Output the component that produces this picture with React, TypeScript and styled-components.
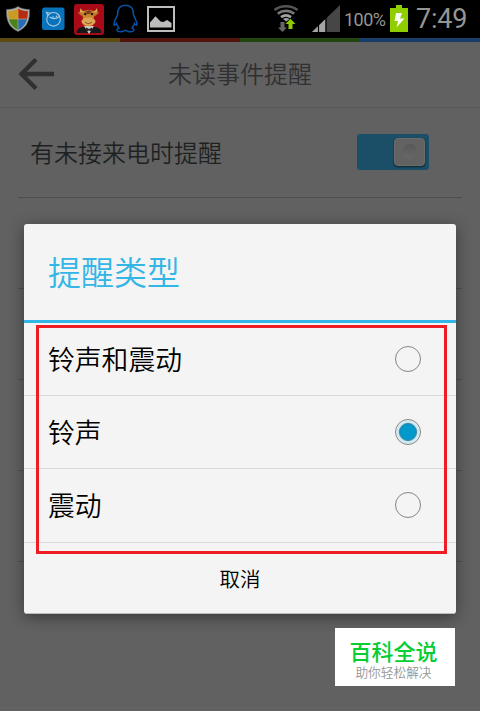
import React, { useState } from 'react';
import styled, { createGlobalStyle } from 'styled-components';

const GlobalStyle = createGlobalStyle`
  * { box-sizing: border-box; }
  body { margin: 0; background: #616161; }
`;

const Screen = styled.div`
  position: relative;
  width: 480px;
  height: 711px;
  overflow: hidden;
  background: #616161;
  font-family: "Noto Sans CJK SC", sans-serif;
  font-weight: 350;
`;

const StatusBar = styled.header`
  display: flex;
  justify-content: space-between;
  height: 38px;
  background: #000;
`;

const StatusIcons = styled.svg`
  display: block;
  flex: none;
`;

const StatusRight = styled.div`
  display: flex;
  align-items: center;
  height: 38px;
`;

const BatteryText = styled.span`
  width: 48px;
  padding-left: 2px;
  color: #949694;
  font: 400 18px/38px Roboto, sans-serif;
  letter-spacing: -0.5px;
  padding-top: 2px;
`;

const Clock = styled.span`
  width: 72px;
  padding-left: 8px;
  color: #949694;
  font: 400 27px/38px Roboto, sans-serif;
  letter-spacing: -0.2px;
`;

const ColourStrip = styled.div`
  display: grid;
  grid-template-columns: repeat(4, 1fr);
  height: 4px;
`;

const StripPart = styled.span<{ $colour: string }>`
  background: ${(p) => p.$colour};
`;

const TitleBar = styled.div`
  display: grid;
  grid-template-columns: 72px 1fr 72px;
  align-items: center;
  height: 66px;
  border-bottom: 1px solid #585858;
`;

const BackIcon = styled.svg`
  display: block;
  margin: -2px 0 0 17px;
`;

const PageTitle = styled.h1`
  margin: -3px 0 0;
  text-align: center;
  color: #303030;
  font-size: 24px;
  font-weight: 350;
  line-height: 36px;
`;

const SettingsList = styled.div`
  padding: 0 18px;
`;

const SettingRow = styled.div`
  display: flex;
  align-items: center;
  justify-content: space-between;
  height: 91px;
  padding: 0 33px 0 12px;
  border-bottom: 1px solid #4e4e4e;
  &:first-child { height: 90px; }
`;

const SettingLabel = styled.span`
  margin-top: -2px;
  color: #1e2122;
  font-size: 24px;
  line-height: 36px;
`;

const Switch = styled.button`
  display: flex;
  align-items: center;
  justify-content: flex-end;
  width: 72px;
  height: 36px;
  margin-top: -2px;
  padding: 0 4px 0 0;
  border: 0;
  border-radius: 3px;
  background: #1b4f67;
`;

const SwitchThumb = styled.span`
  display: grid;
  place-items: center;
  width: 31px;
  height: 28px;
  border: 1px solid #6b6b6b;
  border-radius: 4px;
  background: #626262;
  box-shadow: 0 1px 2px rgba(0, 0, 0, 0.55);
  &::after {
    content: '';
    width: 14px;
    height: 15px;
    border-radius: 50%;
    background: linear-gradient(#585858, #686868);
  }
`;

const Dialog = styled.section`
  position: absolute;
  left: 24px;
  top: 224px;
  width: 432px;
  height: 390px;
  border-radius: 3px;
  background: #f4f4f4;
  border-bottom: 1px solid #bcbcbc;
  box-shadow: 0 3px 15px rgba(0, 0, 0, 0.42);
`;

const DialogTitle = styled.h2`
  height: 99px;
  margin: 0;
  padding-left: 24px;
  border-bottom: 3px solid #33b5e5;
  color: #33b5e5;
  font-size: 33px;
  font-weight: 350;
  line-height: 94px;
`;

const Option = styled.label<{ $last: boolean }>`
  display: flex;
  align-items: center;
  justify-content: space-between;
  height: ${(p) => (p.$last ? 74 : 73)}px;
  padding: 0 35px ${(p) => (p.$last ? 1 : 0)}px 24px;
  border-bottom: 1px solid #d8d8d8;
  color: #000;
  font-size: 26.8px;
  line-height: 40px;
`;

const OptionName = styled.span`
  padding-bottom: 1px;
`;

const Radio = styled.button<{ $checked: boolean }>`
  display: grid;
  place-items: center;
  width: 26px;
  height: 26px;
  padding: 0;
  border: 1.500px solid #858585;
  border-radius: 50%;
  background: ${(p) => (p.$checked ? 'radial-gradient(circle closest-side, #a5d8ea 62%, #e6f1f5 100%)' : 'transparent')};
  &::after {
    content: '';
    width: 16px;
    height: 16px;
    border-radius: 50%;
    border: 1px solid #38819f;
    background: #0099cc;
    visibility: ${(p) => (p.$checked ? 'visible' : 'hidden')};
  }
`;

const CancelButton = styled.button`
  display: block;
  width: 100%;
  height: 70px;
  padding: 0;
  border: 0;
  background: transparent;
  color: #000;
  font: 350 20.5px/70px "Noto Sans CJK SC", sans-serif;
`;

const Highlight = styled.div`
  position: absolute;
  left: 36px;
  top: 325px;
  width: 411px;
  height: 229px;
  border: 3px solid #ee1c25;
  pointer-events: none;
`;

const Watermark = styled.aside`
  position: absolute;
  left: 335px;
  top: 628px;
  width: 120px;
  height: 58px;
  padding: 9px 3px 0 0;
  background: #fff;
  text-align: center;
`;

const WatermarkName = styled.div`
  color: #05ce34;
  font-size: 22px;
  font-weight: 500;
  line-height: 26px;
`;

const WatermarkTagline = styled.div`
  color: #969696;
  font-size: 12.7px;
  font-weight: 350;
  line-height: 18px;
`;

const options = ['铃声和震动', '铃声', '震动'];

function NotificationIcons() {
  return (
    <StatusIcons width="180" height="38" viewBox="0 0 180 38">
      <defs>
        <clipPath id="shield"><path d="M18 8.500c3 2 6 2.600 9.800 2.600.2 8.500-1.800 15-9.800 19-8-4-10-10.500-9.800-19C12 11.100 15 10.500 18 8.500z" /></clipPath>
      </defs>
      <path d="M18 6.500c3.500 2.200 7 2.900 11.500 2.900.5 10.500-2 17.500-11.500 22.200C8.500 26.900 6 19.900 6.500 9.400 11 9.400 14.500 8.700 18 6.500z" fill="#aeb0ac" stroke="#5b5d5b" strokeWidth=".6" />
      <g clipPath="url(#shield)">
        <path fill="#c99b22" d="M7 7h11v12H7z" />
        <path fill="#b52c13" d="M18 7h12v12H18z" />
        <path fill="#48841b" d="M7 19h11v13H7z" />
        <path fill="#256bb8" d="M18 19h12v13H18z" />
        <path d="M7 19h22M18 7v24" stroke="#d5b06a" strokeWidth=".6" />
      </g>
      <rect x="42" y="7.500" width="22.500" height="22.500" rx="2.500" fill="#0873ba" />
      <g fill="none" stroke="#a9c9dc" strokeWidth="1.100">
        <circle cx="53.500" cy="19.300" r="6.800" />
        <path d="M50.200 13.300L46.500 12.300l1.300 3.400M49.500 17c2.600 2 6.500 2 10-.5" />
      </g>
      <circle cx="53" cy="17" r=".8" fill="#b5d5e5" /><circle cx="56.500" cy="16.200" r=".8" fill="#b5d5e5" />
      <rect x="74" y="4" width="30" height="31" rx="3" fill="#a90a18" />
      <path d="M76.500 33c0-4 3-5.500 6-6h12c4 .5 7 2 7 6z" fill="#161719" />
      <path d="M84 26l5 8 5-8z" fill="#c9c9c7" />
      <path d="M86 27.500l3 1.500 3-1.500v4l-3-1-3 1z" fill="#292320" />
      <path d="M83 14c-3.500-.5-4-3-2-6 0 2 1.500 3.300 4 3M94 14c3.500-.5 4.500-3 2.500-6 0 2-1.500 3.300-4 3" fill="#dba953" />
      <path d="M77.500 12.500l6 0-1 4zM99.500 12.500l-6 0 1 4z" fill="#c17827" />
      <path d="M82.500 12c3-3 9-3 12 0l-1 8c1.500 3 0 5.500-2.500 6h-5c-3-.5-4.500-3-3-6z" fill="#cc8428" />
      <path d="M85 10l3 1 1-2 1 2 2-1-2 4h-3z" fill="#7d3e18" />
      <ellipse cx="88.500" cy="21.500" rx="7" ry="4" fill="#dda455" />
      <circle cx="85.300" cy="14" r="1.300" fill="#211914" /><circle cx="92" cy="14" r="1.300" fill="#211914" />
      <path d="M85 22c2 2 5 2 7 0" stroke="#6a3518" fill="none" strokeWidth=".8" />
      <path d="M125.500 5.200c-5.500 0-8.500 4-8 9.800-1.900 4-4 7-3.500 10.300 1 .4 2-1 2.600-1.800.4 2 1.200 3.300 2.300 4.600-1.400.6-2.200 1.300-1.800 2.400.8 1.700 6 1.600 7.600-.1h1.600c1.600 1.700 6.800 1.800 7.600.1.400-1.100-.4-1.800-1.800-2.400 1.100-1.300 1.900-2.600 2.300-4.600.6.800 1.600 2.200 2.400 1.800.6-3.300-1.400-6.300-3.300-10.300.5-5.800-2.500-9.800-8-9.800z" fill="none" stroke="#0751a4" strokeWidth="1.500" />
      <rect x="148" y="7" width="26" height="24" fill="none" stroke="#bdbdbb" strokeWidth="2" />
      <path d="M150 27.500V22.500l5.500-6.300 5 5.300 3 .5 3.500-2 4.500 3v4.500z" fill="#bdbdbb" />
    </StatusIcons>
  );
}

function SignalIcons() {
  return (
    <StatusIcons width="72" height="38" viewBox="0 0 72 38">
      <g fill="none" strokeWidth="2.700">
        <path d="M4.500 10C11 5 21 5 27.500 10" stroke="#545554" />
        <path d="M7.800 13.700C12.500 10 19.500 10 24.200 13.700" stroke="#777877" />
        <path d="M11 17.200C14 15 18 15 21 17.200" stroke="#a0a1a0" />
      </g>
      <path d="M13 19c2-1.300 4.500-1.300 6.500 0L16.300 21.500z" fill="#a0a1a0" />
      <path d="M10.500 22v5.500H8l4.500 4.500 4.500-4.500h-2.500V22z" fill="#656665" />
      <path d="M18.500 29v-5H15.500l5-5.300 5 5.300h-3v5z" fill="#8dcc00" />
      <path d="M70 5v27H42z" fill="#464646" />
      <path d="M55.500 19v13H42z" fill="#a5a5a5" />
      <path d="M48.500 24V32M56 16V32" stroke="#000" strokeWidth="1.200" />
    </StatusIcons>
  );
}

function BatteryIcon() {
  return (
    <StatusIcons width="18" height="38" viewBox="0 0 18 38">
      <path d="M6 5h6v3h6v24H0V8h6z" fill="#91ce00" />
      <path d="M6 13h6l-2 5.500h4.500L6.500 27.500 8 21H4.500z" fill="#f8fcf1" />
    </StatusIcons>
  );
}

export default function App() {
  const [selected, setSelected] = useState(1);
  return (
    <Screen>
      <GlobalStyle />
      <StatusBar>
        <NotificationIcons />
        <StatusRight>
          <SignalIcons />
          <BatteryText>100%</BatteryText>
          <BatteryIcon />
          <Clock>7:49</Clock>
        </StatusRight>
      </StatusBar>
      <ColourStrip>
        {['#5e4a10', '#50150c', '#23450f', '#193d68'].map((c) => <StripPart key={c} $colour={c} />)}
      </ColourStrip>
      <TitleBar>
        <BackIcon width="38" height="34" viewBox="0 0 38 34">
          <path d="M37 17H4M19 2.500L4.500 17 19 31.500" fill="none" stroke="#303030" strokeWidth="4.300" />
        </BackIcon>
        <PageTitle>未读事件提醒</PageTitle>
      </TitleBar>
      <SettingsList>
        <SettingRow>
          <SettingLabel>有未接来电时提醒</SettingLabel>
          <Switch><SwitchThumb /></Switch>
        </SettingRow>
        <SettingRow /><SettingRow /><SettingRow /><SettingRow />
      </SettingsList>
      <Dialog>
        <DialogTitle>提醒类型</DialogTitle>
        {options.map((name, i) => (
          <Option key={name} $last={i === options.length - 1}>
            <OptionName>{name}</OptionName>
            <Radio $checked={selected === i} onClick={() => setSelected(i)} />
          </Option>
        ))}
        <CancelButton>取消</CancelButton>
      </Dialog>
      <Highlight />
      <Watermark>
        <WatermarkName>百科全说</WatermarkName>
        <WatermarkTagline>助你轻松解决</WatermarkTagline>
      </Watermark>
    </Screen>
  );
}
